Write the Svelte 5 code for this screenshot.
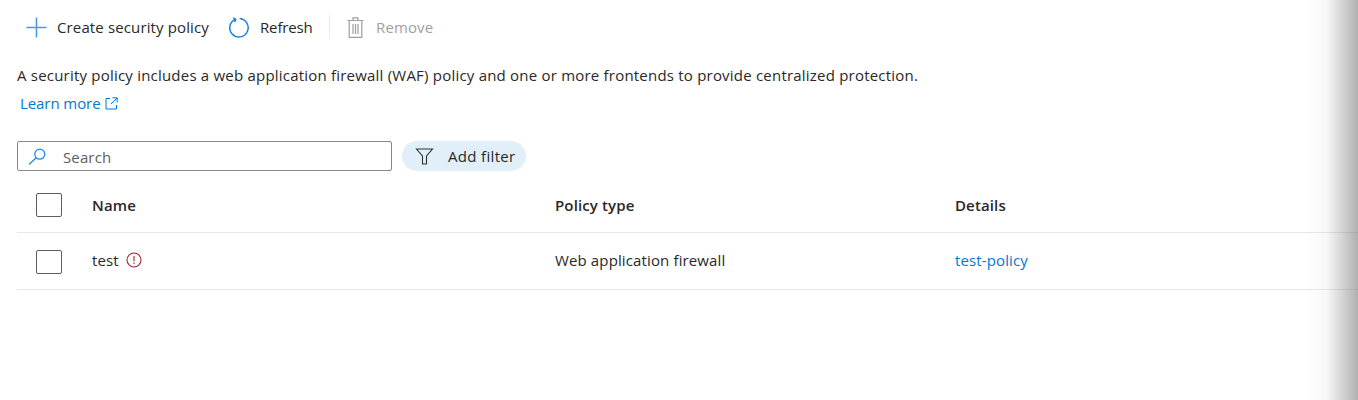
<script>
	const columns = ["Name", "Policy type", "Details"];
</script>

<style>
	:global(body) {
		margin: 0;
		background: #fff;
	}

	.page {
		position: relative;
		width: 1358px;
		height: 400px;
		overflow: hidden;
		font-family: "Open Sans", "Noto Sans", sans-serif;
		font-size: 15px;
		letter-spacing: 0.13px;
		color: #292827;
		padding: 0 0 0 17px;
		box-sizing: border-box;
	}

	.shade {
		position: absolute;
		top: 0;
		right: 0;
		bottom: 0;
		width: 52px;
		background: linear-gradient(to right, rgba(120, 120, 120, 0), rgba(120, 120, 120, 0.06) 40%, rgba(110, 110, 110, 0.55));
	}

	.toolbar {
		display: flex;
		align-items: center;
		height: 38px;
		padding: 8px 0 0 9px;
	}

	.tool {
		display: flex;
		align-items: center;
	}

	.tool svg {
		display: block;
	}

	.create {
		gap: 10px;
		width: 203px;
	}

	.refresh {
		gap: 10px;
		width: 100px;
		letter-spacing: -0.15px;
	}

	.sep {
		width: 1px;
		height: 24px;
		background: #edebe9;
		margin-right: 17px;
	}

	.remove {
		gap: 12px;
		color: #a19f9d;
	}

	.intro {
		margin: 0;
		padding-top: 19px;
		line-height: 20px;
		letter-spacing: 0.21px;
	}

	.learn {
		display: flex;
		align-items: center;
		gap: 5px;
		padding: 8px 0 0 3px;
		line-height: 20px;
		letter-spacing: -0.08px;
		color: #0078d4;
	}

	.filters {
		display: flex;
		gap: 10px;
		padding-top: 28px;
	}

	.search {
		display: flex;
		align-items: center;
		gap: 16px;
		width: 375px;
		height: 30px;
		box-sizing: border-box;
		border: 1px solid #8a8886;
		border-radius: 2px;
		padding-left: 10px;
		color: #605e5c;
	}

	.search span {
		margin-top: 2px;
	}

	.pill {
		display: flex;
		align-items: center;
		gap: 14px;
		width: 124px;
		height: 30px;
		box-sizing: border-box;
		padding-left: 13px;
		border-radius: 15px;
		background: #e1eff9;
		letter-spacing: 0.33px;
	}

	.row {
		display: grid;
		grid-template-columns: 75px 463px 400px 1fr;
		align-items: center;
		height: 57px;
		padding-bottom: 2px;
		border-bottom: 1px solid #e9e8e7;
		box-sizing: border-box;
	}

	.row .check {
		margin-top: 4px;
	}

	.row.head {
		height: 62px;
		padding: 7px 0 0;
		font-weight: 600;
	}

	.row.head .check {
		margin-top: 0;
	}

	.check {
		width: 26px;
		height: 24px;
		margin-left: 19px;
		box-sizing: border-box;
		border: 1px solid #605e5c;
		border-radius: 2px;
	}

	.name {
		display: flex;
		align-items: center;
		gap: 7px;
	}

	.link {
		color: #0078d4;
	}
</style>

<div class="page">
	<div class="toolbar">
		<div class="tool create">
			<svg width="21" height="21" viewBox="0 0 21 21" fill="none" stroke="#4b9ade" stroke-width="1.6"><path d="M10.5 0.5v20M0.5 10.5h20" /></svg>
			<span>Create security policy</span>
		</div>
		<div class="tool refresh">
			<svg width="21" height="21" viewBox="0 0 21 21" fill="none" stroke="#1f84d8" stroke-width="1.5"><path d="M6.6 2.2a9.2 9.2 0 1 0 4-0.6" /><path d="M4.4 0.8l2.4 1.6-1.2 2.6" /></svg>
			<span>Refresh</span>
		</div>
		<div class="sep"></div>
		<div class="tool remove">
			<svg width="17" height="21" viewBox="0 0 17 21" fill="none" stroke="#a19f9d" stroke-width="1.2"><path d="M0.5 3.5h16M6 3.5v-2.6h5v2.6M2.2 3.5v16.9h12.6v-16.9M6 7v10M8.5 7v10M11 7v10" /></svg>
			<span>Remove</span>
		</div>
	</div>

	<p class="intro">A security policy includes a web application firewall (WAF) policy and one or more frontends to provide centralized protection.</p>
	<div class="learn">
		<span>Learn more</span>
		<svg width="13" height="13" viewBox="0 0 13 13" fill="none" stroke="#0078d4" stroke-width="1"><path d="M5 1.5h-4v10.5h10.5v-4M7.5 0.8h4.7v4.7M12 1l-6 6" /></svg>
	</div>

	<div class="filters">
		<div class="search">
			<svg width="19" height="17" viewBox="0 0 19 17" fill="none" stroke="#2b88d8" stroke-width="1.3"><circle cx="11.8" cy="6.2" r="5" /><path d="M8.2 9.8l-7.2 6.6" /></svg>
			<span>Search</span>
		</div>
		<div class="pill">
			<svg width="19" height="19" viewBox="0 0 19 19" fill="none" stroke="#323130" stroke-width="1.1"><path d="M1.5 2h16l-6 7v8h-4v-8z" /></svg>
			<span>Add filter</span>
		</div>
	</div>

	<div class="row head">
		<div class="check"></div>
		{#each columns as col}
			<div>{col}</div>
		{/each}
	</div>
	<div class="row">
		<div class="check"></div>
		<div class="name">
			<span>test</span>
			<svg width="16" height="16" viewBox="0 0 16 16" fill="none" stroke="#a4262c" stroke-width="1.1"><circle cx="8" cy="8" r="7" /><path d="M8 4v5.2M8 10.6v1.4" /></svg>
		</div>
		<div>Web application firewall</div>
		<div class="link">test-policy</div>
	</div>

	<div class="shade"></div>
</div>
